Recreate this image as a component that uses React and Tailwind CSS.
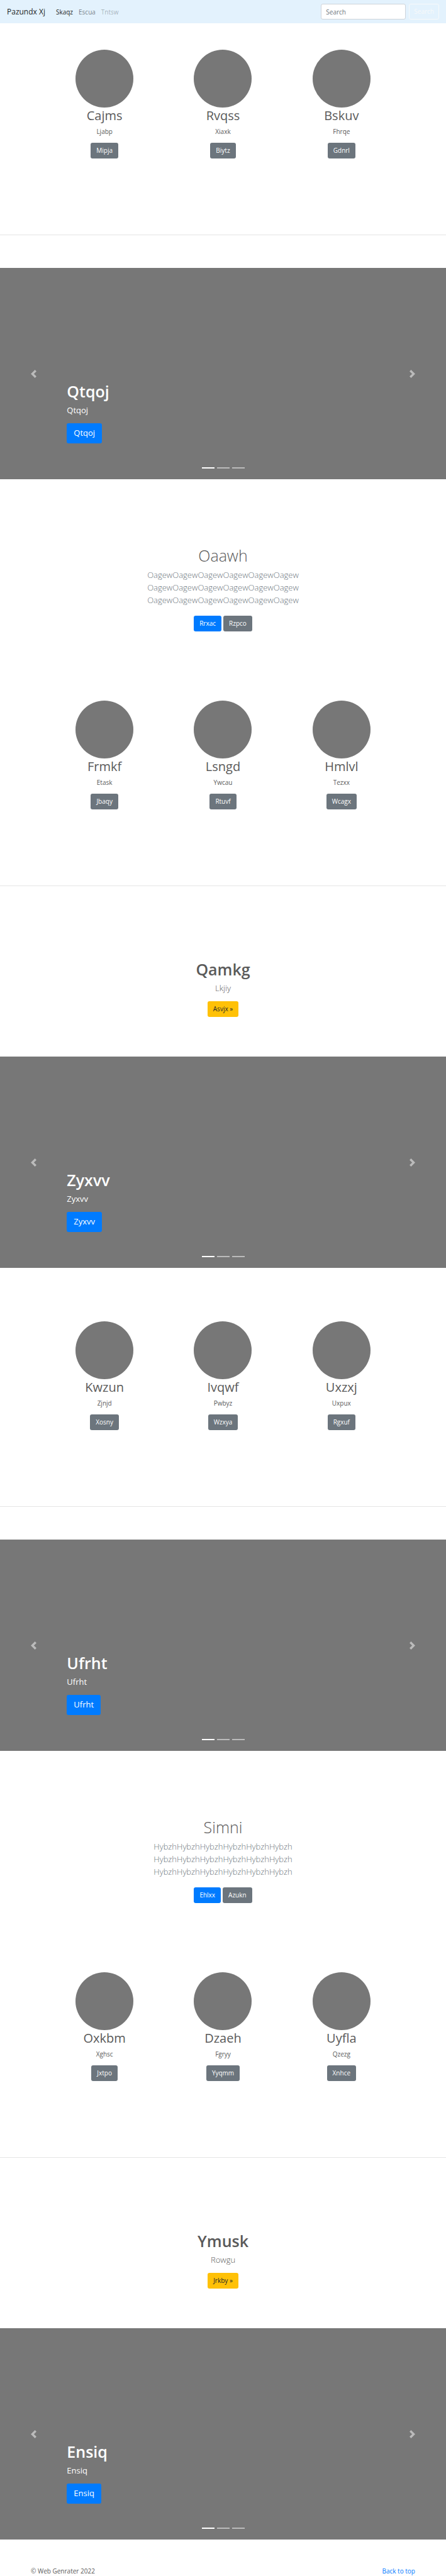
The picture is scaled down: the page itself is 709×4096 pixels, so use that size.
import React from "react";

function Button({ tone, large, children }) {
  const tones = {
    blue: "bg-[#007bff] text-white",
    gray: "bg-[#6c757d] text-white",
    yellow: "bg-[#ffc107] text-[#212529]",
  };
  const size = large
    ? "h-8 rounded-[3px] px-[11px] text-[13px]"
    : "h-[25px] rounded-[3px] px-[9px] text-[10px]";
  return (
    <button type="button" className={`inline-flex items-center ${size} ${tones[tone]}`}>
      {children}
    </button>
  );
}

function Navbar() {
  return (
    <nav className="flex h-[37px] items-center justify-between bg-[#e3f2fd] px-[11px]">
      <div className="flex items-center">
        <a href="#top" className="mr-3 text-[12px] leading-5 text-black/90">
          Pazundx Xj
        </a>
        <div className="flex items-center gap-[9px] pl-[5px] text-[10px] leading-4">
          <a href="#skaqz" className="text-black/90">Skaqz</a>
          <a href="#escua" className="text-black/50">Escua</a>
          <a href="#tntsw" className="text-black/30">Tntsw</a>
        </div>
      </div>
      <form className="flex items-center gap-[5px]">
        <input
          type="search"
          placeholder="Search"
          aria-label="Search"
          className="h-[25px] w-[135px] rounded-[3px] border border-[#ced4da] bg-white px-[7px] text-[10px] text-[#495057] placeholder:text-[#6c757d]"
        />
        <button
          type="button"
          className="h-[25px] rounded-[3px] border border-[#f8f9fa] px-[7px] text-[10px] text-[#f8f9fa]"
        >
          Search
        </button>
      </form>
    </nav>
  );
}

function Features({ items }) {
  return (
    <section className="grid grid-cols-3 border-b border-black/10 px-[72px] pb-[121px]">
      {items.map(([title, text, action]) => (
        <div key={title} className="flex flex-col items-center">
          <div className="size-[92px] rounded-full bg-[#777]" />
          <h2 className="text-[20px] leading-[25px]">{title}</h2>
          <p className="mt-[5px] mb-[10px] text-[10px] leading-4">{text}</p>
          <Button tone="gray">{action}</Button>
        </div>
      ))}
    </section>
  );
}

function Carousel({ title }) {
  return (
    <section className="relative h-[336px] bg-[#777] text-white">
      <div className="flex h-full flex-col items-start justify-end px-[15%] pb-[57px]">
        <h1 className="text-[25px] leading-8 font-semibold">{title}</h1>
        <p className="mt-1 mb-[11px] text-[13px] leading-5">{title}</p>
        <Button tone="blue" large>{title}</Button>
      </div>
      <button
        type="button"
        aria-label="Previous"
        className="absolute inset-y-0 left-0 flex w-[15%] items-center justify-center opacity-50"
      >
        <svg viewBox="0 0 8 8" className="size-[13px]" fill="#fff">
          <path d="M5.25 0l-4 4 4 4 1.5-1.5L4.25 4l2.5-2.5L5.25 0z" />
        </svg>
      </button>
      <button
        type="button"
        aria-label="Next"
        className="absolute inset-y-0 right-0 flex w-[15%] items-center justify-center opacity-50"
      >
        <svg viewBox="0 0 8 8" className="size-[13px]" fill="#fff">
          <path d="M2.75 0l-1.5 1.5L3.75 4l-2.5 2.5L2.75 8l4-4-4-4z" />
        </svg>
      </button>
      <div className="absolute inset-x-0 bottom-[17px] flex justify-center gap-1">
        <span className="h-0.5 w-5 bg-white" />
        <span className="h-0.5 w-5 bg-white/50" />
        <span className="h-0.5 w-5 bg-white/50" />
      </div>
    </section>
  );
}

function Album({ title, line, primary, secondary }) {
  return (
    <section className="flex flex-col items-center pt-[105px] pb-[110px] text-center">
      <h1 className="text-[25px] leading-8 font-light">{title}</h1>
      <p className="mt-[5px] mb-[15px] text-[13px] leading-5 font-light text-[#6c757d]">
        {line}
        <br />
        {line}
        <br />
        {line}
      </p>
      <div className="flex gap-[3px]">
        <Button tone="blue">{primary}</Button>
        <Button tone="gray">{secondary}</Button>
      </div>
    </section>
  );
}

function Pitch({ title, text, action }) {
  return (
    <section className="flex flex-col items-center pt-[116px] pb-[63px] text-center">
      <h1 className="text-[25px] leading-8 font-semibold">{title}</h1>
      <p className="mt-1 mb-[11px] text-[13px] leading-5 font-light">{text}</p>
      <Button tone="yellow">{action} »</Button>
    </section>
  );
}

export default function App() {
  return (
    <div
      id="top"
      className="bg-white font-['Open_Sans','Noto_Sans',sans-serif] text-[#5a5a5a]"
    >
      <Navbar />
      <main>
        <div className="pt-[42px] pb-[52px]">
          <Features
            items={[
              ["Cajms", "Ljabp", "Mipja"],
              ["Rvqss", "Xiaxk", "Biytz"],
              ["Bskuv", "Fhrqe", "Gdnrl"],
            ]}
          />
        </div>
        <Carousel title="Qtqoj" />
        <Album
          title="Oaawh"
          line="OagewOagewOagewOagewOagewOagew"
          primary="Rrxac"
          secondary="Rzpco"
        />
        <Features
          items={[
            ["Frmkf", "Etask", "Jbaqy"],
            ["Lsngd", "Ywcau", "Rtuvf"],
            ["Hmlvl", "Tezxx", "Wcagx"],
          ]}
        />
        <Pitch title="Qamkg" text="Lkjiy" action="Asvjx" />
        <Carousel title="Zyxvv" />
        <div className="pt-[85px] pb-[52px]">
          <Features
            items={[
              ["Kwzun", "Zjnjd", "Xosny"],
              ["Ivqwf", "Pwbyz", "Wzxya"],
              ["Uxzxj", "Uxpux", "Rgxuf"],
            ]}
          />
        </div>
        <Carousel title="Ufrht" />
        <Album
          title="Simni"
          line="HybzhHybzhHybzhHybzhHybzhHybzh"
          primary="Ehlxx"
          secondary="Azukn"
        />
        <Features
          items={[
            ["Oxkbm", "Xghsc", "Jxtpo"],
            ["Dzaeh", "Fgryy", "Yyqmm"],
            ["Uyfla", "Qzezg", "Xnhce"],
          ]}
        />
        <Pitch title="Ymusk" text="Rowgu" action="Jrkby" />
        <Carousel title="Ensiq" />
      </main>
      <footer className="flex justify-between px-[49px] pt-[42px] text-[10px] leading-4">
        <p>© Web Genrater 2022</p>
        <a href="#top" className="text-[#007bff]">Back to top</a>
      </footer>
    </div>
  );
}
